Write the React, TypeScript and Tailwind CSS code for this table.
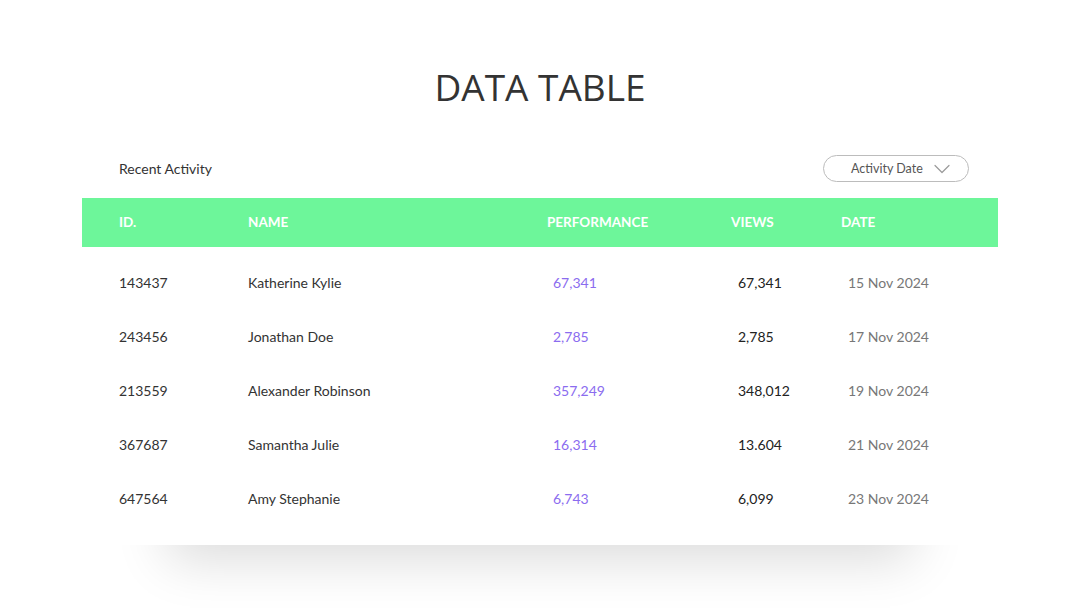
type Row = {
  id: string;
  name: string;
  performance: string;
  views: string;
  date: string;
};

const rows: Row[] = [
  { id: '143437', name: 'Katherine Kylie', performance: '67,341', views: '67,341', date: '15 Nov 2024' },
  { id: '243456', name: 'Jonathan Doe', performance: '2,785', views: '2,785', date: '17 Nov 2024' },
  { id: '213559', name: 'Alexander Robinson', performance: '357,249', views: '348,012', date: '19 Nov 2024' },
  { id: '367687', name: 'Samantha Julie', performance: '16,314', views: '13.604', date: '21 Nov 2024' },
  { id: '647564', name: 'Amy Stephanie', performance: '6,743', views: '6,099', date: '23 Nov 2024' },
];

function App() {
  return (
    <div className="w-full h-[608px] bg-white flex flex-col items-center overflow-hidden font-['Lato',sans-serif]">
      {/* Title */}
      <h1 className="mt-[67px] text-[37px] leading-10 text-[#333333] font-medium font-['Open_Sans',sans-serif]">
        DATA TABLE
      </h1>

      <div className="w-[916px] mt-[48px]">
        {/* Toolbar */}
        <div className="flex items-center justify-between pl-[37px] pr-[29px] h-[27px]">
          <span className="text-[14px] text-[#333333]">Recent Activity</span>
          <button className="w-[146px] h-[27px] rounded-full border border-[#bcbcbc] flex items-center pl-[27px] pr-[18px] text-[12.5px] text-[#555555]">
            <span className="pt-px">Activity Date</span>
            <svg className="ml-auto" width="16" height="10" viewBox="0 0 16 10" fill="none">
              <polyline points="1,1.5 8,8.5 15,1.5" stroke="#9a9a9a" strokeWidth="1.2" strokeLinecap="round" strokeLinejoin="round" />
            </svg>
          </button>
        </div>

        {/* Table card */}
        <div className="mt-4 bg-white pb-5 shadow-[0_100px_50px_-85px_rgba(0,0,0,0.14)]">
          <div className="h-[49px] bg-[#6df69a] grid grid-cols-[129px_299px_184px_110px_1fr] items-center pl-[37px] text-[13.5px] font-bold text-white">
            <div>ID.</div>
            <div>NAME</div>
            <div>PERFORMANCE</div>
            <div>VIEWS</div>
            <div>DATE</div>
          </div>

          <div className="pt-2">
            {rows.map((row) => (
              <div
                key={row.id}
                className="h-[54px] grid grid-cols-[129px_299px_184px_110px_1fr] items-center pl-[37px] text-[14px]"
              >
                <div className="text-[#333333]">{row.id}</div>
                <div className="text-[#333333]">{row.name}</div>
                <div className="pl-[6px] text-[#8b6cef]">{row.performance}</div>
                <div className="pl-[7px] text-[#222222]">{row.views}</div>
                <div className="pl-[7px] text-[#777777]">{row.date}</div>
              </div>
            ))}
          </div>
        </div>
      </div>
    </div>
  );
}

export default App;
